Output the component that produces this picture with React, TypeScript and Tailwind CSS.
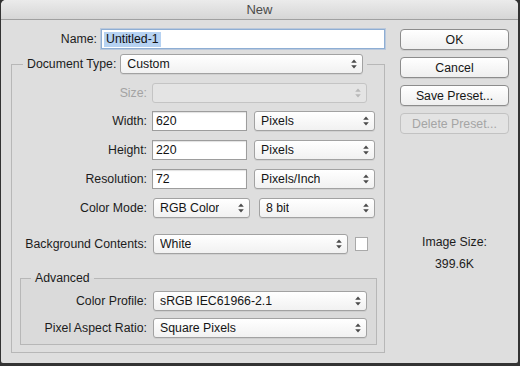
import type { ReactNode } from "react";

const font = { fontFamily: '"Liberation Sans", Arial, sans-serif' };

function Chevrons({ disabled = false }: { disabled?: boolean }) {
  return (
    <svg width="6" height="10" viewBox="0 0 6 10" className="shrink-0">
      <path d="M3 0.5 L5.8 3.8 H0.2 Z" fill={disabled ? "#b8b8b8" : "#4a4a4a"} />
      <path d="M0.2 6.2 H5.8 L3 9.5 Z" fill={disabled ? "#b8b8b8" : "#4a4a4a"} />
    </svg>
  );
}

function Select({ value, width, disabled = false, className = "" }: { value?: string; width: string; disabled?: boolean; className?: string }) {
  return (
    <div
      className={`${width} h-[20px] flex items-center justify-between pl-[6px] pr-[5px] rounded-[3px] border ${
        disabled
          ? "border-[#c4c4c4] bg-[#e4e4e4]"
          : "border-[#a2a2a2] bg-gradient-to-b from-white to-[#f1f1f1] shadow-[0_1px_0_rgba(0,0,0,0.06)]"
      } ${className}`}
    >
      <span className="text-[12.3px] leading-[14px] text-[#151515] truncate">{value}</span>
      <Chevrons disabled={disabled} />
    </div>
  );
}

function TextInput({ value, width }: { value: string; width: string }) {
  return (
    <div className={`${width} h-[20px] flex items-center pl-[3px] bg-white border border-[#9d9d9d] shadow-[inset_0_1px_1px_rgba(0,0,0,0.12)]`}>
      <span className="text-[12.3px] leading-[14px] text-[#111]">{value}</span>
    </div>
  );
}

function Row({ label, labelWidth = "w-[135px]", disabled = false, className = "", children }: { label: string; labelWidth?: string; disabled?: boolean; className?: string; children: ReactNode }) {
  return (
    <div className={`flex items-center h-[20px] ${className}`}>
      <span className={`${labelWidth} shrink-0 text-right text-[12.3px] leading-[14px] ${disabled ? "text-[#a3a3a3]" : "text-[#1c1c1c]"}`}>
        {label}
      </span>
      <div className="ml-[5px] flex items-center">{children}</div>
    </div>
  );
}

function Button({ label, disabled = false }: { label: string; disabled?: boolean }) {
  return (
    <div
      className={`w-[109px] h-[21px] flex items-center justify-center rounded-[4px] border text-[12.3px] leading-[14px] ${
        disabled
          ? "border-[#c2c2c2] bg-[#e3e3e3] text-[#a5a5a5]"
          : "border-[#8c8c8c] bg-gradient-to-b from-white to-[#efefef] text-[#161616] shadow-[0_1px_0_rgba(0,0,0,0.08)]"
      }`}
    >
      {label}
    </div>
  );
}

export default function App() {
  return (
    <div className="w-[520px] h-[366px] bg-[#333333] flex" style={font}>
      <div className="ml-[1px] mr-[2px] mb-[3px] w-[517px] h-[363px] flex flex-col bg-[#dedede] rounded-t-[5px] rounded-b-[2px] overflow-hidden">
        {/* title bar */}
        <div className="h-[20px] shrink-0 flex items-center justify-center bg-gradient-to-b from-[#ebebeb] to-[#d6d6d6] border-b border-[#a0a0a0]">
          <span className="text-[13px] leading-[14px] text-[#4b4b4b]">New</span>
        </div>

        <div className="flex pt-[9px]">
          {/* left column */}
          <div className="w-[384px] flex flex-col">
            <div className="flex items-center h-[20px]">
              <span className="w-[96px] text-right text-[12.3px] leading-[14px] text-[#1c1c1c]">Name:</span>
              <div className="ml-[4px] w-[284px] h-[20px] flex items-center pl-[2px] bg-white border border-[#8eaed4] shadow-[0_0_0_1px_rgba(120,160,215,0.35)]">
                <span className="px-[2px] bg-[#b6d2f2] text-[12.3px] leading-[15px] text-[#111]">Untitled-1</span>
              </div>
            </div>

            <fieldset className="ml-[10px] mt-[5px] w-[374px] border border-[#b7b7b7] px-0 pb-[7px]">
              <legend className="ml-[11px] px-[4px]">
                <div className="flex items-center gap-[4px]">
                  <span className="text-[12.3px] leading-[14px] text-[#1c1c1c]">Document Type:</span>
                  <Select value="Custom" width="w-[243px]" />
                </div>
              </legend>

              <div className="flex flex-col pt-[9px]">
                <Row label="Size:" disabled>
                  <Select width="w-[215px]" disabled />
                </Row>
                <Row label="Width:" className="mt-[8px]">
                  <TextInput value="620" width="w-[95px]" />
                  <Select value="Pixels" width="w-[121px]" className="ml-[7px]" />
                </Row>
                <Row label="Height:" className="mt-[9px]">
                  <TextInput value="220" width="w-[95px]" />
                  <Select value="Pixels" width="w-[121px]" className="ml-[7px]" />
                </Row>
                <Row label="Resolution:" className="mt-[9px]">
                  <TextInput value="72" width="w-[95px]" />
                  <Select value="Pixels/Inch" width="w-[121px]" className="ml-[7px]" />
                </Row>
                <Row label="Color Mode:" className="mt-[9px]">
                  <Select value="RGB Color" width="w-[97px]" className="ml-[1px]" />
                  <Select value="8 bit" width="w-[116px]" className="ml-[9px]" />
                </Row>
                <Row label="Background Contents:" className="mt-[16px]">
                  <Select value="White" width="w-[195px]" className="ml-[1px]" />
                  <div className="ml-[7px] w-[13px] h-[14px] bg-white border border-[#a9a9a9]" />
                </Row>

                <fieldset className="ml-[8px] mr-[7px] mt-[17px] border border-[#b7b7b7] bg-black/[0.015] px-0 pb-[6px]">
                  <legend className="ml-[10px] px-[4px] text-[12.3px] leading-[14px] text-[#1c1c1c]">Advanced</legend>
                  <div className="flex flex-col pt-[6px]">
                    <Row label="Color Profile:" labelWidth="w-[126px]">
                      <Select value="sRGB IEC61966-2.1" width="w-[214px]" className="ml-[1px]" />
                    </Row>
                    <Row label="Pixel Aspect Ratio:" labelWidth="w-[126px]" className="mt-[7px]">
                      <Select value="Square Pixels" width="w-[214px]" className="ml-[1px]" />
                    </Row>
                  </div>
                </fieldset>
              </div>
            </fieldset>
          </div>

          {/* right column */}
          <div className="ml-[15px] w-[109px] flex flex-col">
            <div className="flex flex-col gap-[7px]">
              <Button label="OK" />
              <Button label="Cancel" />
              <Button label="Save Preset..." />
              <Button label="Delete Preset..." disabled />
            </div>
            <div className="mt-[101px] text-center text-[12.3px] leading-[14px] text-[#1c1c1c]">Image Size:</div>
            <div className="mt-[8px] text-center text-[12.3px] leading-[14px] text-[#1c1c1c]">399.6K</div>
          </div>
        </div>
      </div>
    </div>
  );
}
